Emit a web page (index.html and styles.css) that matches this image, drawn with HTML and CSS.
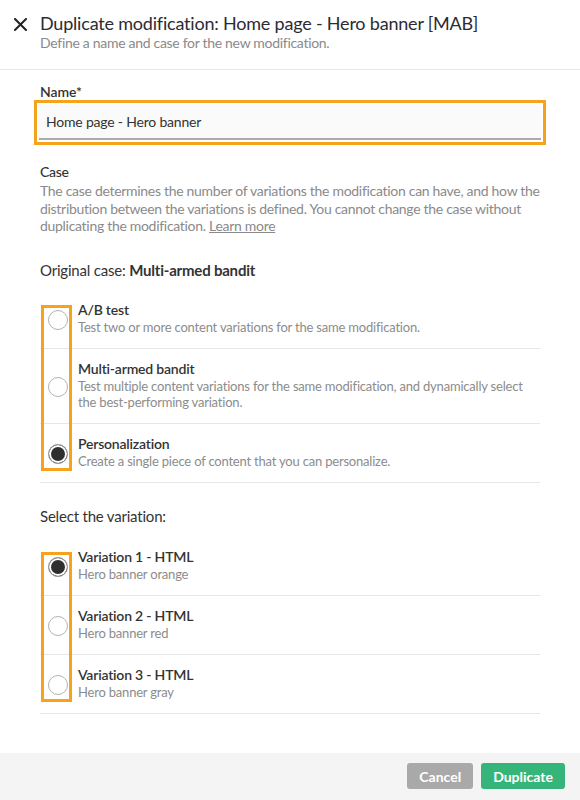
FILE: index.html
```html
<!DOCTYPE html>
<html lang="en">
<head>
<meta charset="utf-8">
<title>Duplicate modification</title>
<link rel="stylesheet" href="styles.css">
</head>
<body>
<div class="page">
  <header class="head">
    <svg class="close" width="13" height="13" viewBox="0 0 13 13" aria-hidden="true">
      <path d="M1 1 L12 12 M12 1 L1 12" stroke="#222" stroke-width="2" stroke-linecap="square" fill="none"/>
    </svg>
    <div class="head-text">
      <h1 class="title">Duplicate modification: Home page - Hero banner [MAB]</h1>
      <p class="subtitle">Define a name and case for the new modification.</p>
    </div>
  </header>

  <main class="content">
    <label class="field-label" for="name">Name*</label>
    <div class="hl-field">
      <input id="name" class="input" type="text" value="Home page - Hero banner">
    </div>

    <h2 class="section-title">Case</h2>
    <p class="help">The case determines the number of variations the modification can have, and how the distribution between the variations is defined. You cannot change the case without duplicating the modification. <a class="link" href="#">Learn more</a></p>

    <p class="lead">Original case: <strong>Multi-armed bandit</strong></p>

    <div class="group group-case">
      <div class="row">
        <span class="radio"></span>
        <div class="row-text">
          <div class="row-title">A/B test</div>
          <div class="row-desc">Test two or more content variations for the same modification.</div>
        </div>
      </div>
      <div class="row">
        <span class="radio"></span>
        <div class="row-text">
          <div class="row-title">Multi-armed bandit</div>
          <div class="row-desc">Test multiple content variations for the same modification, and dynamically select the best-performing variation.</div>
        </div>
      </div>
      <div class="row">
        <span class="radio checked"></span>
        <div class="row-text">
          <div class="row-title">Personalization</div>
          <div class="row-desc">Create a single piece of content that you can personalize.</div>
        </div>
      </div>
      <span class="hl-radios"></span>
    </div>

    <p class="lead lead-var">Select the variation:</p>

    <div class="group group-var">
      <div class="row">
        <span class="radio checked"></span>
        <div class="row-text">
          <div class="row-title">Variation 1 - HTML</div>
          <div class="row-desc">Hero banner orange</div>
        </div>
      </div>
      <div class="row">
        <span class="radio"></span>
        <div class="row-text">
          <div class="row-title">Variation 2 - HTML</div>
          <div class="row-desc">Hero banner red</div>
        </div>
      </div>
      <div class="row">
        <span class="radio"></span>
        <div class="row-text">
          <div class="row-title">Variation 3 - HTML</div>
          <div class="row-desc">Hero banner gray</div>
        </div>
      </div>
      <span class="hl-radios"></span>
    </div>
  </main>

  <footer class="foot">
    <button class="btn btn-cancel" type="button">Cancel</button>
    <button class="btn btn-primary" type="button">Duplicate</button>
  </footer>
</div>
</body>
</html>
```

FILE: styles.css
```css
* { box-sizing: border-box; }

html, body {
  margin: 0;
  padding: 0;
  background: #fff;
}

body {
  font-family: Lato, "Open Sans", "Liberation Sans", sans-serif;
  color: #333;
  letter-spacing: -0.3px;
}

.page {
  height: 800px;
  display: flex;
  flex-direction: column;
}

.head {
  display: flex;
  align-items: flex-start;
  gap: 13px;
  padding: 12px 20px 17px 14px;
  border-bottom: 1px solid #e6e6e6;
}

.close {
  flex: none;
  margin-top: 6px;
}

.title {
  margin: 0;
  font-size: 18px;
  line-height: 22px;
  font-weight: 400;
  letter-spacing: -0.2px;
  color: #2b2b33;
}

.subtitle {
  margin: 0;
  font-size: 14px;
  line-height: 18px;
  color: #8a8a8a;
}

.content {
  flex: 1;
  padding: 14px 40px 0;
}

.field-label {
  display: block;
  font-size: 14px;
  line-height: 16px;
  font-weight: 600;
  letter-spacing: -0.1px;
  color: #333;
}

.hl-field {
  margin: 0 -6px;
  border: 3px solid #f7a21b;
  padding: 2px;
}

.input {
  display: block;
  width: 100%;
  height: 35px;
  margin: 0;
  padding: 0 7px;
  border: 0;
  border-bottom: 2px solid #ababab;
  background: #fafafa;
  font-family: inherit;
  font-size: 14px;
  line-height: 33px;
  letter-spacing: -0.2px;
  color: #333;
  outline: none;
}

.section-title {
  margin: 18px 0 0;
  font-size: 14px;
  line-height: 18px;
  font-weight: 500;
  color: #333;
}

.help {
  margin: 1px 0 0;
  font-size: 14px;
  line-height: 17.5px;
  color: #8a8a8a;
}

.link {
  color: #8a8a8a;
  text-decoration: underline;
}

.lead {
  margin: 25px 0 0;
  font-size: 15px;
  line-height: 20px;
  letter-spacing: -0.2px;
  color: #333;
}

.lead strong {
  font-weight: 700;
}

.lead-var {
  margin-top: 23px;
}

.group {
  position: relative;
  margin-top: 10px;
}

.group-var {
  margin-top: 11px;
}

.row {
  display: flex;
  align-items: center;
  gap: 10px;
  padding: 11px 0 13px;
  border-bottom: 1px solid #e6e6e6;
}

.radio {
  flex: none;
  width: 20px;
  height: 20px;
  margin: 4px 0 0 8px;
  border: 1px solid #b3b3b3;
  border-radius: 50%;
  background: #fff;
}

.radio.checked {
  border-color: #9a9a9a;
  background: #2f2f2f;
  box-shadow: inset 0 0 0 2px #fff;
}

.row-title {
  font-size: 14px;
  line-height: 18px;
  font-weight: 600;
  letter-spacing: -0.2px;
  color: #333;
}

.row-desc {
  font-size: 13px;
  line-height: 16px;
  letter-spacing: -0.2px;
  color: #8c8c8c;
}

.hl-radios {
  position: absolute;
  left: 1px;
  top: 15px;
  bottom: 12px;
  width: 31px;
  border: 3px solid #f7a21b;
  pointer-events: none;
}

.foot {
  flex: none;
  height: 47px;
  background: #f4f4f4;
  display: flex;
  justify-content: flex-end;
  align-items: flex-start;
  gap: 8px;
  padding: 10px 15px 0;
}

.btn {
  height: 26px;
  padding: 0 12px;
  border: 0;
  border-radius: 3px;
  font-family: inherit;
  font-size: 14px;
  font-weight: 700;
  letter-spacing: 0;
  color: #fff;
  cursor: pointer;
}

.btn-cancel {
  background: #a9a9a9;
}

.btn-primary {
  background: #36b57a;
}
```
